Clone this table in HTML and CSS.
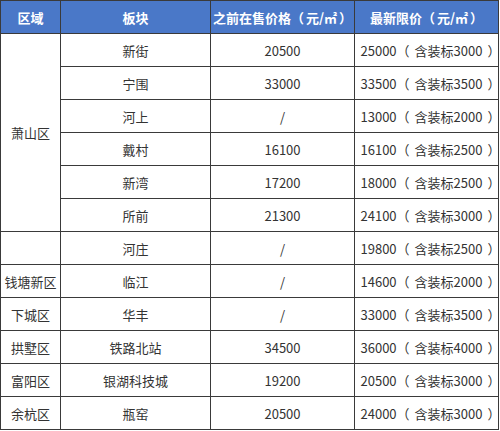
FILE: index.html
```html
<!DOCTYPE html>
<html lang="zh">
<head>
<meta charset="utf-8">
<link rel="stylesheet" href="styles.css">
</head>
<body>
<div class="table">
  <div class="cell head">区域</div>
  <div class="cell head">板块</div>
  <div class="cell head">之前在售价格<span class="lp">（</span>元/㎡<span class="rp">）</span></div>
  <div class="cell head">最新限价<span class="lp">（</span>元/㎡<span class="rp">）</span></div>

  <div class="cell merged">萧山区</div>
  <div class="cell">新街</div><div class="cell">20500</div><div class="cell">25000<span class="lp">（</span>含装标3000<span class="rp">）</span></div>
  <div class="cell">宁围</div><div class="cell">33000</div><div class="cell">33500<span class="lp">（</span>含装标3500<span class="rp">）</span></div>
  <div class="cell">河上</div><div class="cell">/</div><div class="cell">13000<span class="lp">（</span>含装标2000<span class="rp">）</span></div>
  <div class="cell">戴村</div><div class="cell">16100</div><div class="cell">16100<span class="lp">（</span>含装标2500<span class="rp">）</span></div>
  <div class="cell">新湾</div><div class="cell">17200</div><div class="cell">18000<span class="lp">（</span>含装标2500<span class="rp">）</span></div>
  <div class="cell">所前</div><div class="cell">21300</div><div class="cell">24100<span class="lp">（</span>含装标3000<span class="rp">）</span></div>

  <div class="cell"></div><div class="cell">河庄</div><div class="cell">/</div><div class="cell">19800<span class="lp">（</span>含装标2500<span class="rp">）</span></div>
  <div class="cell">钱塘新区</div><div class="cell">临江</div><div class="cell">/</div><div class="cell">14600<span class="lp">（</span>含装标2000<span class="rp">）</span></div>
  <div class="cell">下城区</div><div class="cell">华丰</div><div class="cell">/</div><div class="cell">33000<span class="lp">（</span>含装标3500<span class="rp">）</span></div>
  <div class="cell">拱墅区</div><div class="cell">铁路北站</div><div class="cell">34500</div><div class="cell">36000<span class="lp">（</span>含装标4000<span class="rp">）</span></div>
  <div class="cell">富阳区</div><div class="cell">银湖科技城</div><div class="cell">19200</div><div class="cell">20500<span class="lp">（</span>含装标3000<span class="rp">）</span></div>
  <div class="cell">余杭区</div><div class="cell">瓶窑</div><div class="cell">20500</div><div class="cell">24000<span class="lp">（</span>含装标3000<span class="rp">）</span></div>
</div>
</body>
</html>
```
FILE: styles.css
```css
html, body {
  margin: 0;
  padding: 0;
  background: #fff;
}
.table {
  display: grid;
  grid-template-columns: 59px 149px 143px 143px;
  grid-template-rows: 32px repeat(12, 32px);
  gap: 1px;
  padding: 1px;
  width: max-content;
  background: #3a3a3a;
  font-family: "Noto Sans CJK SC", "Noto Sans", sans-serif;
  font-size: 13px;
  color: #333;
  text-spacing-trim: space-all;
}
.cell {
  background: #fff;
  display: flex;
  align-items: center;
  justify-content: center;
  white-space: nowrap;
}
.lp {
  margin-right: 5px;
}
.rp {
  margin-left: 5px;
  margin-right: -8px;
}
.head {
  background: #4a78c8;
  color: #fff;
  font-weight: bold;
}
.head .lp {
  margin-right: 2px;
}
.head .rp {
  margin-left: 2px;
  margin-right: 0;
}
.merged {
  grid-row: span 6;
}
```
